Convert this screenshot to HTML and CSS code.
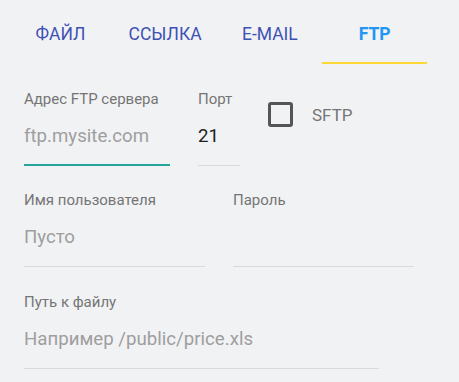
FILE: index.html
```html
<!DOCTYPE html>
<html lang="ru">
<head>
<meta charset="utf-8">
<link rel="stylesheet" href="styles.css">
</head>
<body>
<div class="tabs">
  <div class="tab">ФАЙЛ</div>
  <div class="tab">ССЫЛКА</div>
  <div class="tab">E-MAIL</div>
  <div class="tab active">FTP</div>
</div>
<div class="form">
  <div class="row row1">
    <div class="field w-host">
      <div class="label">Адрес FTP сервера</div>
      <div class="input focused placeholder">ftp.mysite.com</div>
    </div>
    <div class="field w-port">
      <div class="label">Порт</div>
      <div class="input value">21</div>
    </div>
    <label class="check">
      <span class="box"></span>
      <span class="check-text">SFTP</span>
    </label>
  </div>
  <div class="row row2">
    <div class="field w-half">
      <div class="label">Имя пользователя</div>
      <div class="input placeholder">Пусто</div>
    </div>
    <div class="field w-half">
      <div class="label">Пароль</div>
      <div class="input placeholder"></div>
    </div>
  </div>
  <div class="row row3">
    <div class="field w-path">
      <div class="label">Путь к файлу</div>
      <div class="input placeholder">Например /public/price.xls</div>
    </div>
  </div>
</div>
</body>
</html>
```
FILE: styles.css
```css
html, body {
  margin: 0;
  padding: 0;
}
body {
  background: #f1f2f4;
  font-family: Roboto, "Noto Sans", sans-serif;
  width: 459px;
  height: 382px;
  overflow: hidden;
}
.tabs {
  display: flex;
  padding-left: 8px;
}
.tab {
  width: 104.75px;
  box-sizing: border-box;
  padding-top: 24px;
  padding-bottom: 17px;
  border-bottom: 2px solid transparent;
  line-height: 21px;
  font-size: 17.5px;
  text-align: center;
  color: #3f51b5;
  text-transform: uppercase;
}
.tab.active {
  color: #2196f3;
  font-weight: 700;
  border-bottom-color: #fdd835;
}
.form {
  padding-left: 24px;
  padding-top: 27px;
}
.row {
  display: flex;
  gap: 28px;
}
.row2 {
  margin-top: 26px;
}
.row3 {
  margin-top: 27px;
}
.field {
  display: flex;
  flex-direction: column;
}
.w-host { width: 146px; }
.w-port { width: 42px; }
.w-half { width: 181px; }
.w-path { width: 355px; }
.label {
  font-size: 15px;
  line-height: 16px;
  color: #757575;
  white-space: nowrap;
}
.input {
  font-size: 18.67px;
  line-height: 24px;
  height: 24px;
  padding: 17px 0;
  border-bottom: 1px solid #d9dadc;
  white-space: nowrap;
}
.input.focused {
  border-bottom: 2px solid #26a69a;
  padding-bottom: 16px;
}
.placeholder {
  color: #9e9e9e;
}
.value {
  color: #212121;
}
.check {
  display: flex;
  align-items: center;
  gap: 19px;
  margin-top: 11px;
  align-self: flex-start;
}
.box {
  width: 25px;
  height: 25px;
  box-sizing: border-box;
  border: 3px solid #555555;
  border-radius: 3px;
}
.check-text {
  font-size: 17px;
  line-height: 20px;
  color: #757575;
}
```
